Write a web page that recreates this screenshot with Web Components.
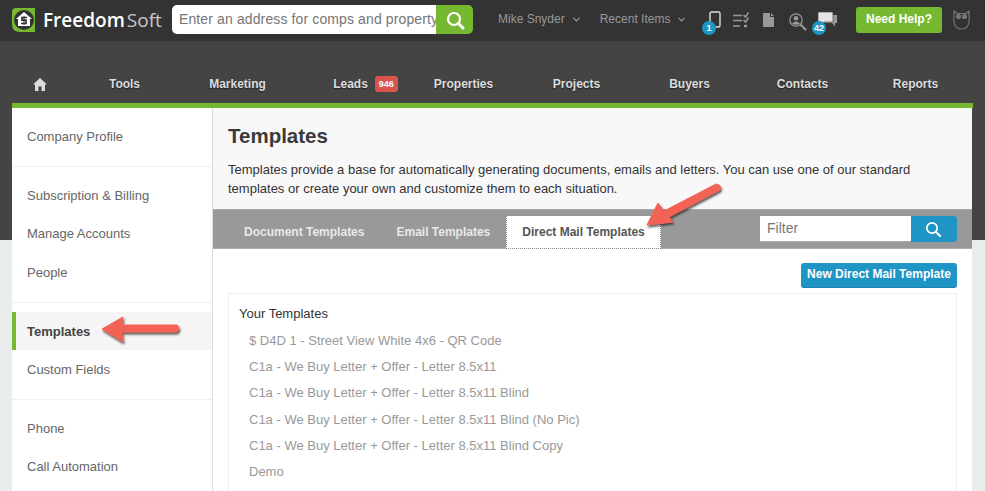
<!DOCTYPE html>
<html>
<head>
<meta charset="utf-8">
<title>Templates</title>
<style>
    html, body { margin: 0; height: 491px; overflow: hidden; }
    body { font-family: "Liberation Sans", Arial, sans-serif; background: linear-gradient(#444 240px, #e8ecec 240px); }
</style>
</head>
<body>

<template id="fs-topbar-tpl">
    <style>
        :host { display: flex; align-items: flex-start; height: 41px; background: #333; padding-left: 12px; box-sizing: border-box; }
        .logo { display: flex; align-items: center; width: 160px; margin-top: 8px; flex: none; }
        .word { font-family: "Open Sans", sans-serif; font-size: 19px; line-height: 24px; margin-left: 7px; white-space: nowrap; }
        .word b { font-weight: 600; color: #fff; }
        .word span { color: #c9c9c9; margin-left: 2px; }
        .search { display: flex; width: 301px; height: 29px; margin-top: 5px; flex: none; }
        .search div { flex: 1; min-width: 0; background: #fff; border-radius: 5px 0 0 5px; color: #757575; font-size: 14px; letter-spacing: .12px; line-height: 28px; padding: 0 4px 0 7px; overflow: hidden; white-space: nowrap; }
        .search button { width: 37px; border: 0; padding: 0; background: #76b82f; border-radius: 0 5px 5px 0; display: flex; align-items: center; justify-content: center; }
        .menus { display: flex; width: 204px; margin-left: 25px; height: 38px; font-size: 12px; color: #999; flex: none; }
        .menus span { display: flex; align-items: center; gap: 8px; margin-right: 20px; white-space: nowrap; }
        .icons { position: relative; width: 154px; height: 41px; flex: none; }
        .icons svg { position: absolute; }
        .badge { position: absolute; width: 14px; height: 14px; border-radius: 50%; background: #1f95c5; color: #fff; font-size: 9px; font-weight: bold; line-height: 14px; text-align: center; }
        .help { width: 86px; height: 26px; margin-top: 7px; background: #76b82f; border-radius: 3px; color: #fff; font-size: 12px; font-weight: bold; line-height: 25px; text-align: center; flex: none; }
        .owl { margin-left: 11px; margin-top: 10px; flex: none; }
    </style>
    <div class="logo">
        <svg width="24" height="24" viewBox="0 0 24 24">
            <path d="M4 0H23V24H8Q0 24 0 16V4Q0 0 4 0Z" fill="#76b82f"/>
            <circle cx="12" cy="12" r="10" fill="#333"/>
            <path d="M12 4L20 11H18V18H6V11H4Z" fill="#fff"/>
            <path d="M15 9.500H10V12.200H14V15.500H9" fill="none" stroke="#333" stroke-width="1.700"/>
            <path d="M12 8V17" stroke="#333" stroke-width="1"/>
        </svg>
        <span class="word"><b>Freedom</b><span>Soft</span></span>
    </div>
    <div class="search">
        <div>Enter an address for comps and property</div>
        <button aria-label="Search"><svg width="20" height="20" viewBox="0 0 20 20" fill="none" stroke="#fff"><circle cx="9" cy="9" r="6" stroke-width="2.200"/><path d="M13.500 13.500L18 18" stroke-width="3" stroke-linecap="round"/></svg></button>
    </div>
    <div class="menus">
        <span>Mike Snyder <svg width="7" height="5" viewBox="0 0 7 5" fill="none" stroke="#999" stroke-width="1.200"><path d="M.5 .8L3.500 3.800L6.500 .8"/></svg></span>
        <span>Recent Items <svg width="7" height="5" viewBox="0 0 7 5" fill="none" stroke="#999" stroke-width="1.200"><path d="M.5 .8L3.500 3.800L6.500 .8"/></svg></span>
    </div>
    <div class="icons">
        <svg style="left:7px;top:11px" width="12" height="17" viewBox="0 0 12 17" fill="none" stroke="#ddd" stroke-width="1.400"><rect x="1" y="1" width="10" height="15" rx="1.500"/></svg>
        <div class="badge" style="left:0;top:21px">1</div>
        <svg style="left:31px;top:12px" width="16" height="16" viewBox="0 0 16 16" fill="none" stroke="#999" stroke-width="1.500"><path d="M0 3.500H9M0 8.500H9M0 14H7M10.500 3L12.500 5L15.500 .5M10.500 8L12.500 10L15.500 5.500"/><path d="M11 14H14" stroke-width="2.500"/></svg>
        <svg style="left:61px;top:13px" width="11" height="14" viewBox="0 0 11 14"><path d="M0 0H7V4H11V14H0ZM8 0L11 3H8Z" fill="#999"/></svg>
        <svg style="left:87px;top:13px" width="18" height="18" viewBox="0 0 18 18" fill="none" stroke="#999"><circle cx="7" cy="7" r="6.200" stroke-width="1.300"/><circle cx="7" cy="5.300" r="2.300" fill="#999" stroke="none"/><path d="M3 10.500Q7 6.500 11 10.500Q7 13 3 10.500Z" fill="#999" stroke="none"/><path d="M11.500 11.500L17 17" stroke-width="2.200"/></svg>
        <svg style="left:116px;top:12px" width="19" height="16" viewBox="0 0 19 16"><path d="M5 3H19V11H17V14.500L14 11H5Z" fill="#999"/><path d="M1 0H14Q15 0 15 1V10H6L3 12.500V10H1Q0 10 0 9V1Q0 0 1 0Z" fill="#e4e4e4" stroke="#333" stroke-width=".6"/></svg>
        <div class="badge" style="left:110px;top:21px">42</div>
    </div>
    <div class="help">Need Help?</div>
    <svg class="owl" width="17" height="20" viewBox="0 0 17 20" fill="none" stroke="#777" stroke-width="1.200"><path d="M1 1L4 3.500H13L16 1V6Q16.500 9 16 12Q15 19 8.500 19Q2 19 1 12Q.5 9 1 6Z"/><circle cx="5.500" cy="6.500" r="2" fill="#777"/><circle cx="11.500" cy="6.500" r="2" fill="#777"/></svg>
</template>

<template id="fs-nav-tpl">
    <style>
        :host { display: block; height: 67px; background: #444; box-sizing: border-box; padding: 0 12px; }
        .row { display: grid; grid-template-columns: 56px repeat(8, 113px); height: 62px; border-bottom: 5px solid #76b82f; }
        .row > * { display: flex; align-items: center; justify-content: center; padding-top: 22px; height: 42px; color: #ddd; font-size: 12px; font-weight: bold; text-shadow: 0 1px 1px #222; }
        .leads { position: relative; left: 15px; gap: 7px; }
        .leads i { font-style: normal; background: #d9534f; color: #fff; border-radius: 3px; font-size: 9px; line-height: 16px; width: 23px; text-align: center; height: 16px; text-shadow: none; }
    </style>
    <div class="row">
        <span><svg width="14" height="13" viewBox="0 0 14 13"><path d="M7 0L14 6.500H12V13H8.500V8.500H5.500V13H2V6.500H0Z" fill="#ddd"/></svg></span>
        <span>Tools</span><span>Marketing</span>
        <span class="leads">Leads <i>946</i></span>
        <span>Properties</span><span>Projects</span><span>Buyers</span><span>Contacts</span><span>Reports</span>
    </div>
</template>

<template id="fs-sidebar-tpl">
    <style>
        :host { display: block; width: 201px; background: #fff; border-right: 1px solid #ddd; box-sizing: border-box; padding-top: 9px; flex: none; }
        ::slotted(hr) { margin: 11px 0 9px; border: 0; border-top: 1px solid #f0f0f0; }
    </style>
    <slot></slot>
</template>

<template id="fs-side-item-tpl">
    <style>
        :host { display: block; height: 38.200px; line-height: 39px; padding-left: 15px; font-size: 13px; color: #666; }
        :host([active]) { background: #f5f5f5; border-left: 4px solid #76b82f; padding-left: 11px; font-weight: bold; color: #444; }
    </style>
    <slot></slot>
</template>

<template id="fs-tabs-tpl">
    <style>
        :host { display: flex; height: 40px; background: #999; border-top: 1px solid #aaa; border-bottom: 1px solid #aaa; box-sizing: border-box; padding-left: 15px; position: relative; }
        .filter { position: absolute; left: 547px; top: 6px; display: flex; width: 197px; height: 26px; }
        .filter div { flex: 1; background: #fff; border-bottom: 1px solid #aaa; color: #777; font-size: 14px; line-height: 24px; padding-left: 7px; }
        .filter span { width: 46px; background: #1f95c5; border-radius: 0 3px 3px 0; display: flex; align-items: center; justify-content: center; }
    </style>
    <slot></slot>
    <div class="filter">
        <div>Filter</div>
        <span><svg width="16" height="16" viewBox="0 0 16 16" fill="none" stroke="#fff" style="margin-right:2px"><circle cx="7" cy="7" r="5.200" stroke-width="1.700"/><path d="M11 11L15 15" stroke-width="2.200" stroke-linecap="round"/></svg></span>
    </div>
</template>

<template id="fs-tab-tpl">
    <style>
        :host { display: block; padding: 0 16px; font-size: 12px; font-weight: bold; color: #e8e8e8; line-height: 45px; height: 38px; white-space: nowrap; }
        :host([active]) { background: #fff; color: #555; margin-top: 6px; line-height: 32px; height: 33px; box-sizing: border-box; border-bottom: 1px dotted #8a8a8a; border-left: 1px dotted #8a8a8a; border-right: 1px dotted #8a8a8a; padding: 0 15px; }
    </style>
    <slot></slot>
</template>

<template id="fs-main-tpl">
    <style>
        :host { display: block; flex: 1; background: #fff; min-width: 0; }
        header { background: #f8f8f8; height: 101px; box-sizing: border-box; padding: 15px 15px 0; color: #333; }
        h1 { margin: 0 0 11px; font-size: 20.500px; line-height: 26px; color: #3a3a3a; }
        p { margin: 0; font-size: 13px; line-height: 19px; }
        .body { padding: 14px 15px 0; }
        .act { display: flex; justify-content: flex-end; }
        .act span { background: #1f95c5; border-radius: 3px; border-bottom: 1px solid #1a82ad; color: #fff; font-weight: bold; font-size: 12px; line-height: 23px; height: 25px; box-sizing: border-box; width: 156px; text-align: center; }
        .list { margin-top: 5px; border: 1px solid #eee; padding: 10px; height: 200px; color: #333; font-size: 13px; }
        .list b { display: block; font-weight: normal; line-height: 19px; margin-bottom: 5px; }
        ::slotted(div) { padding-left: 10px; color: #999; line-height: 26.200px; }
    </style>
    <header>
        <h1>Templates</h1>
        <p>Templates provide a base for automatically generating documents, emails and letters. You can use one of our standard<br>templates or create your own and customize them to each situation.</p>
    </header>
    <slot name="tabs"></slot>
    <div class="body">
        <div class="act"><span>New Direct Mail Template</span></div>
        <div class="list">
            <b>Your Templates</b>
            <slot></slot>
        </div>
    </div>
</template>

<template id="fs-arrows-tpl">
    <style>
        :host { display: block; position: absolute; left: 0; top: 0; width: 985px; height: 491px; pointer-events: none; }
    </style>
    <svg width="985" height="491" viewBox="0 0 985 491">
        <defs><filter id="s" x="-20%" y="-20%" width="140%" height="140%"><feDropShadow dx="1" dy="2" stdDeviation="1" flood-color="#222" flood-opacity=".75"/></filter></defs>
        <path filter="url(#s)" d="M102 329L123 317L122 325H177Q181 328.500 177 332H122L123 342Z" fill="#f26457" stroke="#f26457" stroke-linejoin="round"/>
        <path filter="url(#s)" d="M647 225L658 203L664 211L716 184Q722 185 720 190L669 217L673 222Z" fill="#f26457" stroke="#f26457" stroke-linejoin="round"/>
    </svg>
</template>

<fs-topbar></fs-topbar>
<fs-nav></fs-nav>
<fs-shell>
    <fs-sidebar>
        <fs-side-item>Company Profile</fs-side-item>
        <hr>
        <fs-side-item>Subscription &amp; Billing</fs-side-item>
        <fs-side-item>Manage Accounts</fs-side-item>
        <fs-side-item>People</fs-side-item>
        <hr>
        <fs-side-item active>Templates</fs-side-item>
        <fs-side-item>Custom Fields</fs-side-item>
        <hr>
        <fs-side-item>Phone</fs-side-item>
        <fs-side-item>Call Automation</fs-side-item>
    </fs-sidebar>
    <fs-main>
        <fs-tabs slot="tabs">
            <fs-tab>Document Templates</fs-tab>
            <fs-tab>Email Templates</fs-tab>
            <fs-tab active>Direct Mail Templates</fs-tab>
        </fs-tabs>
        <div>$ D4D 1 - Street View White 4x6 - QR Code</div>
        <div>C1a - We Buy Letter + Offer - Letter 8.5x11</div>
        <div>C1a - We Buy Letter + Offer - Letter 8.5x11 Blind</div>
        <div>C1a - We Buy Letter + Offer - Letter 8.5x11 Blind (No Pic)</div>
        <div>C1a - We Buy Letter + Offer - Letter 8.5x11 Blind Copy</div>
        <div>Demo</div>
    </fs-main>
</fs-shell>
<fs-arrows></fs-arrows>

<script>
    ((w, d) => {
        // Every element here just clones its template into an open shadow root
        const define = (name, tplId, extraCss) => {
            customElements.define(name, class extends HTMLElement {
                constructor() {
                    super();
                    this.attachShadow({mode: 'open'});
                    if (tplId) {
                        this.shadowRoot.appendChild(d.importNode(d.getElementById(tplId).content, true));
                    } else {
                        this.shadowRoot.innerHTML = `<style>${extraCss}</style><slot></slot>`;
                    }
                }
            });
        };

        define('fs-topbar', 'fs-topbar-tpl');
        define('fs-nav', 'fs-nav-tpl');
        define('fs-sidebar', 'fs-sidebar-tpl');
        define('fs-side-item', 'fs-side-item-tpl');
        define('fs-tabs', 'fs-tabs-tpl');
        define('fs-tab', 'fs-tab-tpl');
        define('fs-main', 'fs-main-tpl');
        define('fs-arrows', 'fs-arrows-tpl');
        // Panel sits 12px in from both sides of the window
        define('fs-shell', null, ':host { display: flex; height: 383px; margin: 0 13px 0 12px; overflow: hidden; }');
    })(window, document);
</script>
</body>
</html>
